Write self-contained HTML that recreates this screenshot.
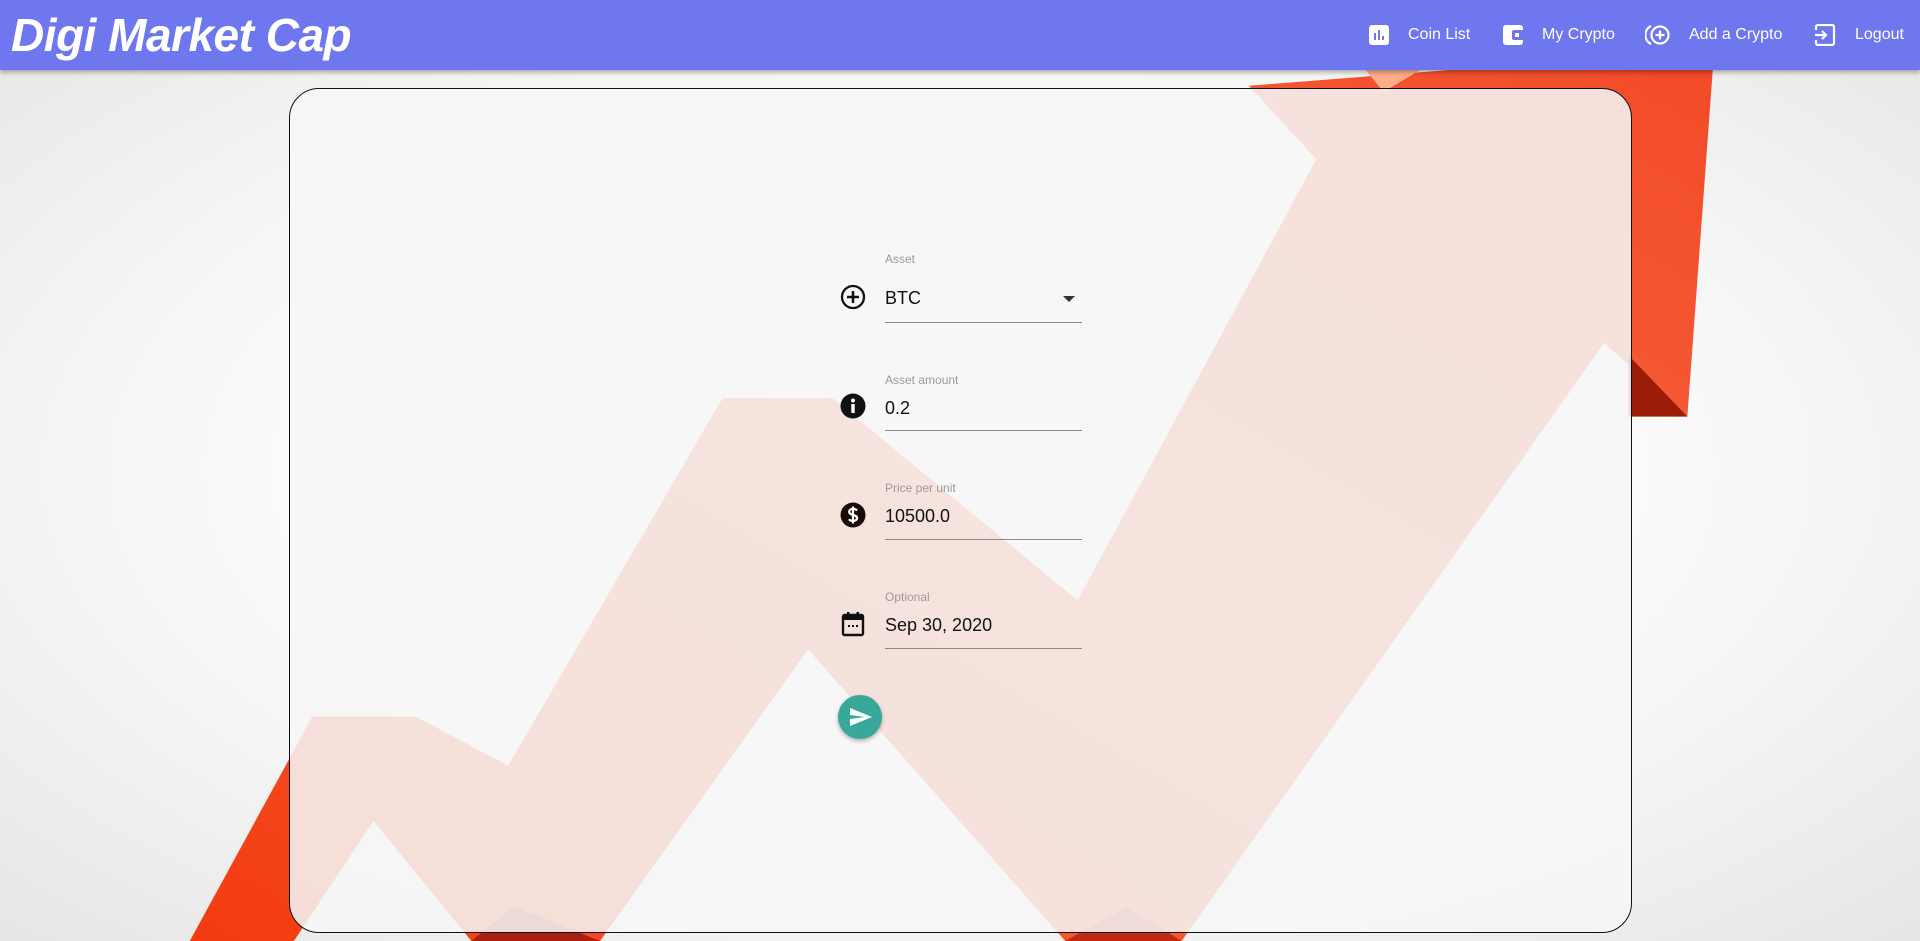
<!DOCTYPE html>
<html><head><meta charset="utf-8"><style>
*{margin:0;padding:0;box-sizing:border-box}
body{width:1920px;height:941px;overflow:hidden;position:relative;font-family:"Liberation Sans",sans-serif;background:radial-gradient(ellipse at 50% 50%,#ffffff 40%,#e6e6e6 100%)}
#bg{position:absolute;left:0;top:0;width:1920px;height:941px}
header{position:absolute;left:0;top:0;width:1920px;height:70px;background:#6f77ef;box-shadow:0 2px 5px rgba(0,0,0,.35);z-index:5}
.title{position:absolute;left:11px;top:8px;color:#fff;font-size:46px;font-style:italic;font-weight:bold;letter-spacing:-0.5px}
.nav{position:absolute;top:0;height:70px;display:flex;align-items:center;color:#fff;font-size:16px}
.card{position:absolute;left:289px;top:88px;width:1343px;height:845px;border:1px solid #111;border-radius:30px;background:rgba(246,246,246,0.87);z-index:3}
.f{position:absolute;left:885px;width:197px;z-index:4}
.lbl{font-size:12px;color:#9a9a9a;position:absolute;left:0}
.val{font-size:18px;color:#111;position:absolute;left:0}
.line{position:absolute;left:0;width:197px;height:1px;background:#8a8a8a}
.ic{position:absolute;z-index:4}
</style></head><body>
<svg id="bg" viewBox="0 0 1568 768" preserveAspectRatio="none">
<defs><linearGradient id="rg" x1="0" y1="1" x2="1" y2="0"><stop offset="0" stop-color="#f33a10"/><stop offset=".5" stop-color="#f96a40"/><stop offset="1" stop-color="#f24a28"/></linearGradient></defs>
<polygon points="155,768 255,585 340,585 415,625 590,325 680,325 880,490 1075,130 1020,70 1400,40 1378,340 1310,280 965,768 870,768 660,530 490,768 385,768 305,670 240,768" fill="url(#rg)"/>
<polygon points="1330,290 1378,340 1330,340" fill="#9a1d08"/>
<polygon points="385,768 420,740 490,768" fill="#a82010"/>
<polygon points="870,768 920,740 965,768" fill="#c02a12"/>
<polygon points="1115,57 1160,57 1130,75" fill="#ffb08a"/>
</svg>
<header>
<div class="title">Digi Market Cap</div>
<div class="nav" style="left:1408px">Coin List</div>
<svg style="position:absolute;left:1368px;top:24px" width="22" height="22" viewBox="0 0 22 22"><rect x="1" y="1" width="20" height="20" rx="3" fill="#fff"/><rect x="6" y="9" width="2" height="7" fill="#6f77ef"/><rect x="10" y="6" width="2" height="10" fill="#6f77ef"/><rect x="14" y="12" width="2" height="4" fill="#6f77ef"/></svg>
<div class="nav" style="left:1542px">My Crypto</div>
<svg style="position:absolute;left:1502px;top:24px" width="22" height="22" viewBox="0 0 22 22"><rect x="1" y="1" width="20" height="20" rx="3" fill="#fff"/><rect x="10" y="6" width="12" height="10" rx="2" fill="#6f77ef"/><rect x="13" y="9" width="4" height="4" fill="#fff"/></svg>
<div class="nav" style="left:1689px">Add a Crypto</div>
<svg style="position:absolute;left:1645px;top:23px" width="26" height="24" viewBox="0 0 26 24"><path d="M6 3 A10 10 0 0 0 6 21" stroke="#fff" stroke-width="2.2" fill="none"/><circle cx="15" cy="12" r="8.5" stroke="#fff" stroke-width="2.2" fill="none"/><path d="M15 7.5v9M10.5 12h9" stroke="#fff" stroke-width="2.2"/></svg>
<div class="nav" style="left:1855px">Logout</div>
<svg style="position:absolute;left:1814px;top:24px" width="22" height="22" viewBox="0 0 22 22"><path d="M2 6V3a2 2 0 0 1 2-2h14a2 2 0 0 1 2 2v16a2 2 0 0 1-2 2H4a2 2 0 0 1-2-2v-3" stroke="#fff" stroke-width="2.2" fill="none"/><path d="M1 11h11M8 7l4 4-4 4" stroke="#fff" stroke-width="2.2" fill="none"/></svg>
</header>
<div class="card"></div>

<div class="f" style="top:252px"><div class="lbl" style="top:0">Asset</div><div class="val" style="top:36px">BTC</div><div style="position:absolute;left:178px;top:44px;width:0;height:0;border-left:6px solid transparent;border-right:6px solid transparent;border-top:6px solid #333"></div><div class="line" style="top:70px"></div></div>
<svg class="ic" style="left:840px;top:284px" width="26" height="26" viewBox="0 0 26 26"><circle cx="13" cy="13" r="11" stroke="#111" stroke-width="2.3" fill="none"/><path d="M13 7v12M7 13h12" stroke="#111" stroke-width="2.5"/></svg>

<div class="f" style="top:373px"><div class="lbl" style="top:0">Asset amount</div><div class="val" style="top:25px">0.2</div><div class="line" style="top:57px"></div></div>
<svg class="ic" style="left:840px;top:393px" width="26" height="26" viewBox="0 0 26 26"><circle cx="13" cy="13" r="12.5" fill="#111"/><rect x="11.3" y="11" width="3.4" height="9" fill="#fff"/><circle cx="13" cy="7.5" r="2" fill="#fff"/></svg>

<div class="f" style="top:481px"><div class="lbl" style="top:0">Price per unit</div><div class="val" style="top:25px">10500.0</div><div class="line" style="top:58px"></div></div>
<svg class="ic" style="left:840px;top:502px" width="26" height="26" viewBox="0 0 26 26"><circle cx="13" cy="13" r="12.5" fill="#1a0a05"/><path d="M17 8.5c-1-1.2-2.4-1.6-4-1.6-2.2 0-3.8 1.1-3.8 2.9 0 4 7.8 2.2 7.8 6.2 0 1.8-1.6 3-4 3-1.6 0-3.1-.6-4-1.8M13 4.5v17" stroke="#fff" stroke-width="2.2" fill="none"/></svg>

<div class="f" style="top:590px"><div class="lbl" style="top:0">Optional</div><div class="val" style="top:25px">Sep 30, 2020</div><div class="line" style="top:58px"></div></div>
<svg class="ic" style="left:841px;top:611px" width="24" height="26" viewBox="0 0 24 26"><rect x="2" y="4" width="20" height="20" rx="1.5" stroke="#111" stroke-width="2.4" fill="none"/><rect x="2" y="4" width="20" height="5" fill="#111"/><rect x="6" y="1" width="2.5" height="5" fill="#111"/><rect x="15.5" y="1" width="2.5" height="5" fill="#111"/><rect x="7" y="14" width="2" height="2" fill="#111"/><rect x="11" y="14" width="2" height="2" fill="#111"/><rect x="15" y="14" width="2" height="2" fill="#111"/></svg>

<div style="position:absolute;left:838px;top:695px;width:44px;height:44px;border-radius:50%;background:#38a89a;box-shadow:0 2px 4px rgba(0,0,0,.3);z-index:4"><svg width="44" height="44" viewBox="0 0 44 44"><path d="M12 13l22 9-22 9 0-7 15-2-15-2z" fill="#fff"/></svg></div>
</body></html>
